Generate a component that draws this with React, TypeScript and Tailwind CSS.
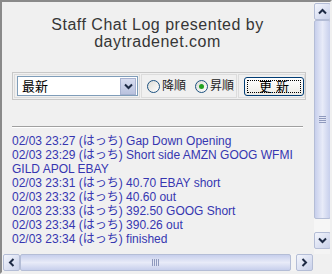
import React from "react";

const lines = [
  "02/03 23:27 (はっち) Gap Down Opening",
  "02/03 23:29 (はっち) Short side AMZN GOOG WFMI",
  "GILD APOL EBAY",
  "02/03 23:31 (はっち) 40.70 EBAY short",
  "02/03 23:32 (はっち) 40.60 out",
  "02/03 23:33 (はっち) 392.50 GOOG Short",
  "02/03 23:34 (はっち) 390.26 out",
  "02/03 23:34 (はっち) finished",
];

function Chevron({ dir }: { dir: "up" | "down" | "left" | "right" }) {
  const rot = { up: 0, right: 90, down: 180, left: 270 }[dir];
  return (
    <svg width="9" height="9" viewBox="0 0 9 9" style={{ transform: `rotate(${rot}deg)` }}>
      <path d="M1 6.5 L4.5 3 L8 6.5" fill="none" stroke="#1d2a44" strokeWidth="2" />
    </svg>
  );
}

function ScrollBtn({ dir }: { dir: "up" | "down" | "left" | "right" }) {
  return (
    <div className="w-[17px] h-[17px] shrink-0 flex items-center justify-center rounded-[2px] border border-[#b4bdd6] bg-gradient-to-br from-[#f3f5fc] to-[#c9d1ea]">
      <Chevron dir={dir} />
    </div>
  );
}

function Radio({ checked }: { checked?: boolean }) {
  return (
    <div className="w-[13px] h-[13px] shrink-0 rounded-full border border-[#1c5180] bg-gradient-to-br from-[#dcdcd6] to-white flex items-center justify-center">
      {checked && <div className="w-[5px] h-[5px] rounded-full bg-[#21a121]" />}
    </div>
  );
}

export default function App() {
  const font = { fontFamily: '"Liberation Sans", "Noto Sans CJK JP", sans-serif' };
  return (
    <div
      className="w-[332px] h-[274px] flex flex-col bg-[#f0f0f0] border-t-2 border-l-2 border-t-[#8a8a8a] border-l-[#8a8a8a] border-r-2 border-b-2 border-r-[#f0f0f0] border-b-[#f0f0f0] overflow-hidden"
      style={font}
    >
      <div className="flex flex-1 min-h-0">
        <div className="flex-1 pl-[10px] pt-[14px] pr-[8px]">
          <div className="text-center text-[16px] leading-[17px] tracking-[0.5px] text-[#363636] pr-[3px]">
            <div>Staff Chat Log presented by</div>
            <div>daytradenet.com</div>
          </div>
          <div className="mt-[22px] w-[294px] h-[28px] border border-[#c8c8c8] p-[1px] flex gap-[1px]">
            <div className="w-[126px] shrink-0 border border-[#dcdcdc] flex items-center pl-[2px]">
              <div className="w-[121px] h-[20px] border border-[#7f9db9] bg-white flex items-center">
                <span className="flex-1 pl-[4px] text-[13px] text-black leading-none">最新</span>
                <div className="w-[16px] h-[17px] mr-[1px] flex items-center justify-center bg-gradient-to-b from-[#d8ddf0] to-[#b9c2de] border border-[#a8b2d0]">
                  <Chevron dir="down" />
                </div>
              </div>
            </div>
            <div className="w-[96px] shrink-0 border border-[#dcdcdc] flex items-center pl-[5px] text-[12px] text-[#222] whitespace-nowrap">
              <Radio />
              <span className="ml-[2px]">降順</span>
              <span className="ml-[9px] flex">
                <Radio checked />
              </span>
              <span className="ml-[2px]">昇順</span>
            </div>
            <div className="flex-1 border border-[#dcdcdc] flex items-center pl-[5px]">
              <div className="w-[60px] h-[19px] rounded-[3px] border border-[#003c74] bg-gradient-to-b from-white to-[#ecebe6] p-[2px]">
                <div className="w-full h-full border border-dotted border-black flex items-center justify-center text-[13px] tracking-[4px] pl-[4px] text-black leading-none">
                  更新
                </div>
              </div>
            </div>
          </div>
          <div className="mt-[26px] w-[291px] border-t border-t-[#a0a0a0] border-b border-b-white" />
          <div className="mt-[6px] text-[12px] leading-[14px] text-[#3636b0] whitespace-nowrap">
            {lines.map((l, i) => (
              <div key={i}>{l}</div>
            ))}
          </div>
        </div>
        <div className="w-[17px] flex flex-col pt-[1px] pb-[5px] bg-[#f4f4f4]">
          <ScrollBtn dir="up" />
          <div className="h-[199px] rounded-[2px] border border-[#b4bdd6] bg-gradient-to-r from-[#c7cfec] via-[#e8ebf8] to-[#c7cfec] flex items-center justify-center">
            <div className="flex flex-col gap-[1px]">
              <div className="w-[7px] h-[1px] bg-[#8f99bd]" />
              <div className="w-[7px] h-[1px] bg-[#8f99bd]" />
              <div className="w-[7px] h-[1px] bg-[#8f99bd]" />
              <div className="w-[7px] h-[1px] bg-[#8f99bd]" />
            </div>
          </div>
          <div className="flex-1 bg-[#f6f6f6]" />
          <ScrollBtn dir="down" />
        </div>
      </div>
      <div className="h-[17px] flex mb-[1px]">
        <div className="flex-1 flex pl-[1px] bg-[#f4f4f4]">
          <ScrollBtn dir="left" />
          <div className="w-[271px] rounded-[2px] border border-[#b4bdd6] bg-gradient-to-b from-[#c7cfec] via-[#e8ebf8] to-[#c7cfec] flex items-center justify-center">
            <div className="flex gap-[1px]">
              <div className="w-[1px] h-[7px] bg-[#8f99bd]" />
              <div className="w-[1px] h-[7px] bg-[#8f99bd]" />
              <div className="w-[1px] h-[7px] bg-[#8f99bd]" />
              <div className="w-[1px] h-[7px] bg-[#8f99bd]" />
            </div>
          </div>
          <div className="flex-1" />
          <ScrollBtn dir="right" />
        </div>
        <div className="w-[17px]" />
      </div>
    </div>
  );
}
